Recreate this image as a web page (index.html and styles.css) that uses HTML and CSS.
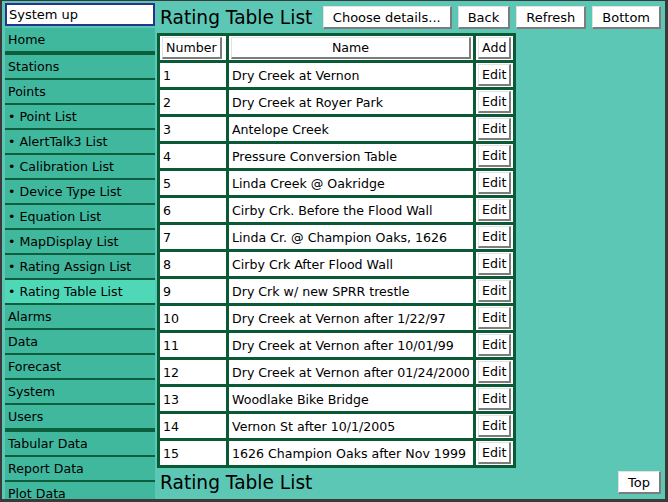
FILE: index.html
```html
<!DOCTYPE html>
<html>
<head>
<meta charset="utf-8">
<title>Rating Table List</title>
<link rel="stylesheet" href="styles.css">
</head>
<body>
<div class="frame">
  <nav class="sidebar">
    <div class="status">System up</div>
    <div class="item group-end">Home</div>
    <div class="item">Stations</div>
    <div class="item">Points</div>
    <div class="item">• Point List</div>
    <div class="item">• AlertTalk3 List</div>
    <div class="item">• Calibration List</div>
    <div class="item">• Device Type List</div>
    <div class="item">• Equation List</div>
    <div class="item">• MapDisplay List</div>
    <div class="item">• Rating Assign List</div>
    <div class="item active">• Rating Table List</div>
    <div class="item">Alarms</div>
    <div class="item">Data</div>
    <div class="item">Forecast</div>
    <div class="item">System</div>
    <div class="item group-end">Users</div>
    <div class="item">Tabular Data</div>
    <div class="item">Report Data</div>
    <div class="item">Plot Data</div>
  </nav>
  <main class="main">
    <div class="header">
      <h1 class="title">Rating Table List</h1>
      <div class="actions">
        <button class="btn">Choose details...</button>
        <button class="btn">Back</button>
        <button class="btn">Refresh</button>
        <button class="btn">Bottom</button>
      </div>
    </div>
    <table class="grid">
      <colgroup><col class="c1"><col class="c2"><col class="c3"></colgroup>
      <thead>
        <tr>
          <th><button class="btn cellbtn">Number</button></th>
          <th><button class="btn cellbtn wide">Name</button></th>
          <th class="act"><button class="btn cellbtn">Add</button></th>
        </tr>
      </thead>
      <tbody>
        <tr><td>1</td><td>Dry Creek at Vernon</td><td class="act"><button class="btn cellbtn">Edit</button></td></tr>
        <tr><td>2</td><td>Dry Creek at Royer Park</td><td class="act"><button class="btn cellbtn">Edit</button></td></tr>
        <tr><td>3</td><td>Antelope Creek</td><td class="act"><button class="btn cellbtn">Edit</button></td></tr>
        <tr><td>4</td><td>Pressure Conversion Table</td><td class="act"><button class="btn cellbtn">Edit</button></td></tr>
        <tr><td>5</td><td>Linda Creek @ Oakridge</td><td class="act"><button class="btn cellbtn">Edit</button></td></tr>
        <tr><td>6</td><td>Cirby Crk. Before the Flood Wall</td><td class="act"><button class="btn cellbtn">Edit</button></td></tr>
        <tr><td>7</td><td>Linda Cr. @ Champion Oaks, 1626</td><td class="act"><button class="btn cellbtn">Edit</button></td></tr>
        <tr><td>8</td><td>Cirby Crk After Flood Wall</td><td class="act"><button class="btn cellbtn">Edit</button></td></tr>
        <tr><td>9</td><td>Dry Crk w/ new SPRR trestle</td><td class="act"><button class="btn cellbtn">Edit</button></td></tr>
        <tr><td>10</td><td>Dry Creek at Vernon after 1/22/97</td><td class="act"><button class="btn cellbtn">Edit</button></td></tr>
        <tr><td>11</td><td>Dry Creek at Vernon after 10/01/99</td><td class="act"><button class="btn cellbtn">Edit</button></td></tr>
        <tr><td>12</td><td>Dry Creek at Vernon after 01/24/2000</td><td class="act"><button class="btn cellbtn">Edit</button></td></tr>
        <tr><td>13</td><td>Woodlake Bike Bridge</td><td class="act"><button class="btn cellbtn">Edit</button></td></tr>
        <tr><td>14</td><td>Vernon St after 10/1/2005</td><td class="act"><button class="btn cellbtn">Edit</button></td></tr>
        <tr><td>15</td><td>1626 Champion Oaks after Nov 1999</td><td class="act"><button class="btn cellbtn">Edit</button></td></tr>
      </tbody>
    </table>
    <div class="footer">
      <h2 class="title">Rating Table List</h2>
      <button class="btn top">Top</button>
    </div>
  </main>
</div>
</body>
</html>
```

FILE: styles.css
```css
html, body {
  margin: 0;
  padding: 0;
  height: 100%;
}
body {
  box-sizing: border-box;
  height: 502px;
  overflow: hidden;
  background: #5dc7b5;
  border-style: solid;
  border-color: #3a3a3a;
  border-width: 1px 3px 3px 2px;
  font-family: "DejaVu Sans", Verdana, sans-serif;
  font-size: 12.6px;
  color: #000;
}
.frame {
  display: flex;
  align-items: flex-start;
  height: 100%;
  overflow: hidden;
}
.sidebar {
  flex: 0 0 150px;
  width: 150px;
  margin-left: 3px;
  margin-top: 2px;
}
.status {
  box-sizing: border-box;
  height: 23px;
  line-height: 19px;
  background: #fff;
  border: 2px solid #24348f;
  padding-left: 2px;
  margin-bottom: 2px;
  font-size: 13px;
}
.item {
  height: 23px;
  line-height: 23px;
  padding-left: 3px;
  background: #3fb89e;
  border-bottom: 2px solid #0c5e3c;
  white-space: nowrap;
}
.item.group-end {
  border-bottom-width: 4px;
}
.item.active {
  background: #4fd8b8;
}
.main {
  flex: 1;
  margin-left: 2px;
  padding-right: 4px;
  display: flex;
  flex-direction: column;
}
.header {
  display: flex;
  align-items: center;
  padding: 5px 0 4px 0;
}
.title {
  margin: 0;
  padding-left: 3px;
  font-size: 18.6px;
  font-weight: normal;
  line-height: 23px;
}
.actions {
  margin-left: auto;
  display: flex;
  gap: 6px;
}
.btn {
  box-sizing: border-box;
  height: 23px;
  padding: 0 9px;
  margin: 0;
  background: #fff;
  font-family: "DejaVu Sans", Verdana, sans-serif;
  font-size: 13px;
  color: #000;
  border-style: solid;
  border-width: 1px 2px 2px 1px;
  border-color: #e2e2e2 #7c7c7c #7c7c7c #e2e2e2;
  border-radius: 0;
}
.grid {
  table-layout: fixed;
  width: 359px;
  border-collapse: separate;
  border-spacing: 3px;
  background: #0b5a36;
}
.c1 { width: 66px; }
.c2 { width: 244px; }
.c3 { width: 37px; }
.grid th, .grid td {
  box-sizing: border-box;
  height: 24px;
  padding: 0 2px 0 3px;
  background: #fff;
  font-weight: normal;
  text-align: left;
  vertical-align: middle;
  white-space: nowrap;
  overflow: hidden;
}
.grid th {
  padding-left: 2px;
}
.grid .act {
  padding: 0 3px 0 2px;
}
.cellbtn {
  height: 22px;
  padding: 0 3px;
  display: block;
  font-size: 12.6px;
}
.cellbtn.wide {
  width: 100%;
}
.footer {
  display: flex;
  align-items: center;
  padding-top: 3px;
}
.top {
  margin-left: auto;
  padding: 0 9px;
}
```
